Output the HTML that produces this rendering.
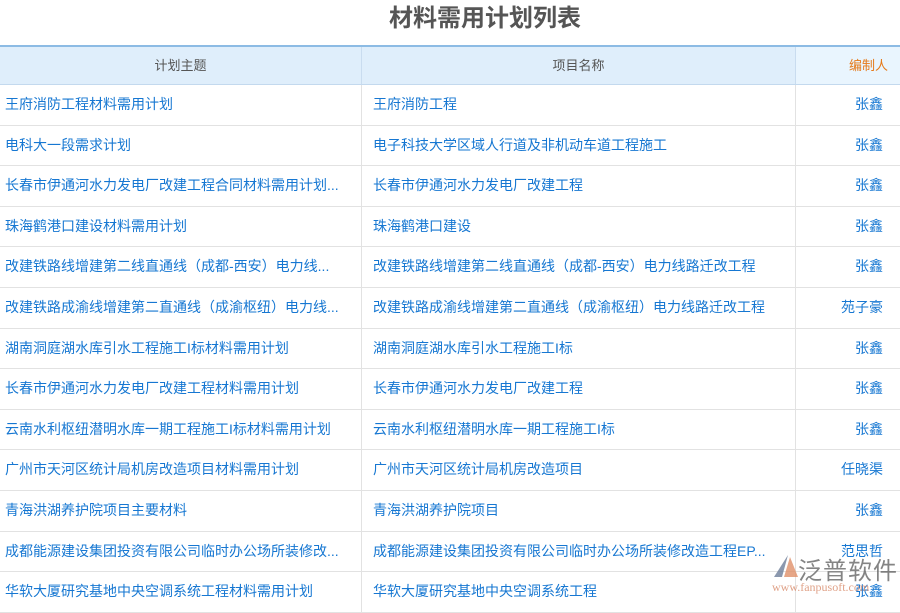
<!DOCTYPE html>
<html><head><meta charset="utf-8"><style>
body{margin:0;width:900px;height:600px;overflow:hidden;background:#fff;font-family:"Liberation Sans","Noto Sans CJK SC",sans-serif;position:relative}
h1{margin:0;position:absolute;top:3px;left:0;width:970px;text-align:center;font-size:24px;font-weight:bold;color:#555;line-height:32px}
.t{position:absolute;top:45px;left:0;width:910px}
.r{display:flex;height:40.6px;box-sizing:border-box;border-bottom:1px solid #e2e2e2}
.r div{box-sizing:border-box;white-space:nowrap;overflow:hidden;line-height:39.6px;font-size:14px;color:#1677d2}
.r div:nth-child(1){width:361px;padding-left:5px}
.r div:nth-child(2){width:434px;padding-left:11px;border-left:1px solid #e2e2e2}
.r div:nth-child(3){width:105px;text-align:right;padding-right:17px;border-left:1px solid #e2e2e2}
.h{height:40px;background:#dfeefb;border-top:2px solid #8cbbe4;border-bottom:1px solid #c3d9ee}
.h div{line-height:37px!important;color:#555!important;text-align:center;padding:0!important;font-size:13px!important}
.h div:nth-child(2){border-left:1px solid #c9dcef!important}
.h div:nth-child(3){background:#e9f5fe;color:#e57a1a!important;text-align:right!important;padding-right:12px!important;border-left:1px solid #c9dcef!important}
.logo{position:absolute;left:768px;top:553px;opacity:.8}
</style></head><body>
<h1>材料需用计划列表</h1>
<div class="t">
<div class="r h"><div>计划主题</div><div>项目名称</div><div>编制人</div></div>
<div class="r"><div>王府消防工程材料需用计划</div><div>王府消防工程</div><div>张鑫</div></div>
<div class="r"><div>电科大一段需求计划</div><div>电子科技大学区域人行道及非机动车道工程施工</div><div>张鑫</div></div>
<div class="r"><div>长春市伊通河水力发电厂改建工程合同材料需用计划...</div><div>长春市伊通河水力发电厂改建工程</div><div>张鑫</div></div>
<div class="r"><div>珠海鹤港口建设材料需用计划</div><div>珠海鹤港口建设</div><div>张鑫</div></div>
<div class="r"><div>改建铁路线增建第二线直通线（成都-西安）电力线...</div><div>改建铁路线增建第二线直通线（成都-西安）电力线路迁改工程</div><div>张鑫</div></div>
<div class="r"><div>改建铁路成渝线增建第二直通线（成渝枢纽）电力线...</div><div>改建铁路成渝线增建第二直通线（成渝枢纽）电力线路迁改工程</div><div>苑子豪</div></div>
<div class="r"><div>湖南洞庭湖水库引水工程施工I标材料需用计划</div><div>湖南洞庭湖水库引水工程施工I标</div><div>张鑫</div></div>
<div class="r"><div>长春市伊通河水力发电厂改建工程材料需用计划</div><div>长春市伊通河水力发电厂改建工程</div><div>张鑫</div></div>
<div class="r"><div>云南水利枢纽潜明水库一期工程施工I标材料需用计划</div><div>云南水利枢纽潜明水库一期工程施工I标</div><div>张鑫</div></div>
<div class="r"><div>广州市天河区统计局机房改造项目材料需用计划</div><div>广州市天河区统计局机房改造项目</div><div>任晓渠</div></div>
<div class="r"><div>青海洪湖养护院项目主要材料</div><div>青海洪湖养护院项目</div><div>张鑫</div></div>
<div class="r"><div>成都能源建设集团投资有限公司临时办公场所装修改...</div><div>成都能源建设集团投资有限公司临时办公场所装修改造工程EP...</div><div>范思哲</div></div>
<div class="r"><div>华软大厦研究基地中央空调系统工程材料需用计划</div><div>华软大厦研究基地中央空调系统工程</div><div>张鑫</div></div>
</div>
<div class="logo">
<svg width="30" height="28" style="position:absolute;left:2px;top:0"><path d="M18 2 L4 24 L12 24 Z" fill="#6f7f9a"/><path d="M20 4 L28 24 L14 24 Z" fill="#e0906a"/></svg>
<div style="position:absolute;left:30px;top:-2px;font-size:24px;color:#666;white-space:nowrap;letter-spacing:1px">泛普软件</div>
<div style="position:absolute;left:4px;top:27px;font-size:12px;color:#d88a6a;font-family:'Liberation Serif',serif;white-space:nowrap">www.fanpusoft.com</div>
</div>
</body></html>
